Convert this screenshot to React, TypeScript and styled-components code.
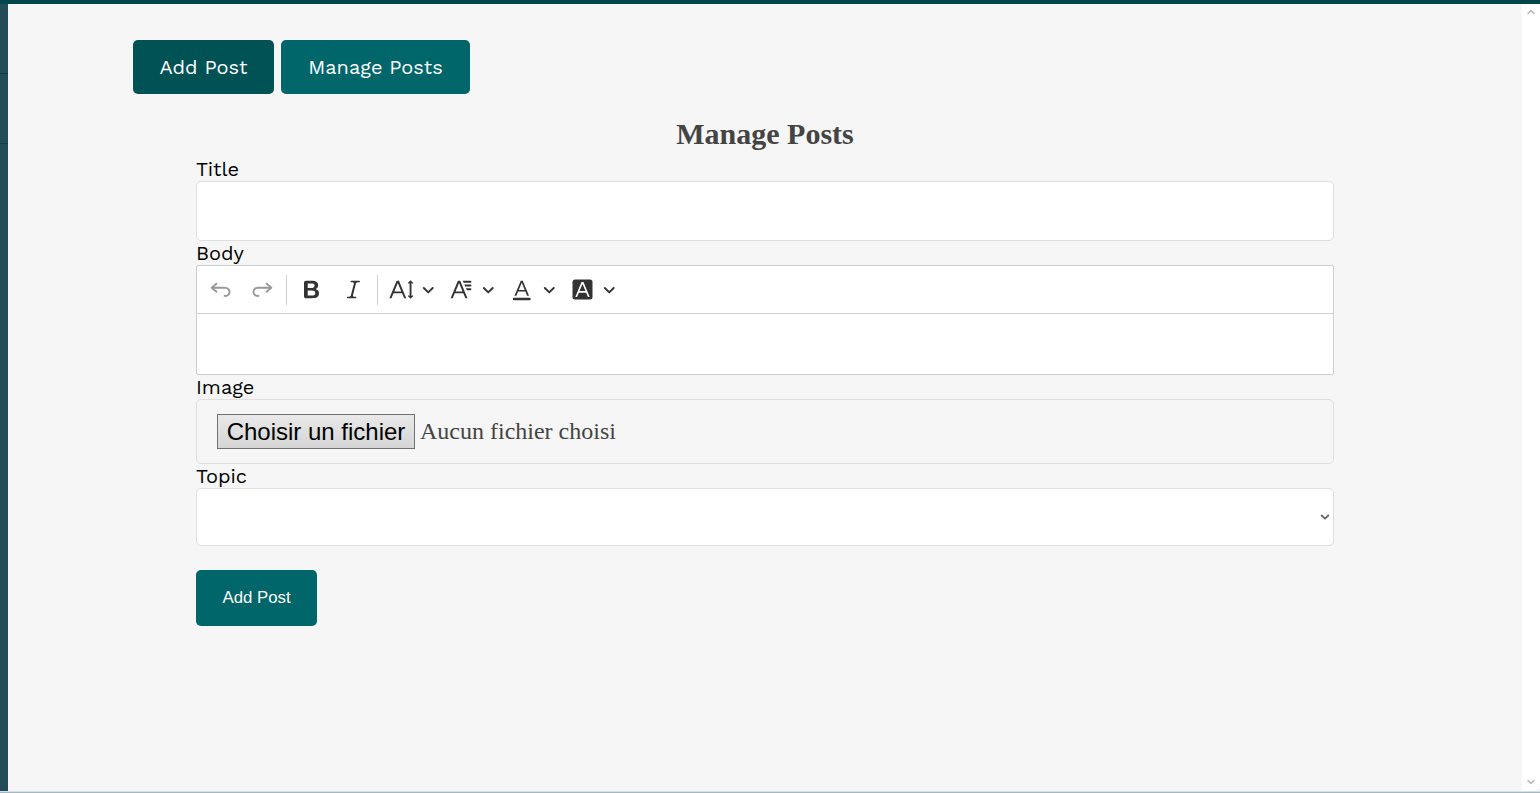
import React from "react";
import styled, { createGlobalStyle } from "styled-components";

const GlobalStyle = createGlobalStyle`
  * { box-sizing: border-box; }
  body { margin: 0; background: #f6f6f6; overflow: hidden; }
`;

const Screen = styled.div`
  display: flex;
  flex-direction: column;
  width: 1540px;
  height: 793px;
  background: #f6f6f6;
`;

const TopBar = styled.div`
  flex: none;
  height: 4px;
  background: #00474b;
`;

const Columns = styled.div`
  flex: 1;
  display: flex;
  min-height: 0;
`;

const Sidebar = styled.div`
  width: 8px;
  background: #244b5a;
`;

const SidebarItem = styled.div`
  height: 70px;
  border-bottom: 1px solid #0a3f49;
`;

const Content = styled.main`
  flex: 1;
  padding: 36px 125px 0;
`;

const ScrollTrack = styled.div`
  width: 18px;
  display: flex;
  flex-direction: column;
  justify-content: space-between;
  align-items: center;
  padding: 5px 1px 6px 0;
  background: #fff;
  border-bottom-right-radius: 8px;
`;

const BottomEdge = styled.div`
  flex: none;
  height: 2px;
  border-top: 1px solid #d3e0e6;
  background: #a5b8bf;
`;

const Actions = styled.div`
  display: flex;
  gap: 7px;
`;

const TabButton = styled.a<{ $active?: boolean; $width: number }>`
  display: flex;
  align-items: center;
  justify-content: center;
  width: ${(p) => p.$width}px;
  height: 54px;
  border-radius: 5px;
  background: ${(p) => (p.$active ? "#005255" : "#006669")};
  color: #fff;
  font: 20px/22px "Work Sans", "Open Sans", sans-serif;
  white-space: nowrap;
`;

const Form = styled.form`
  display: flex;
  flex-direction: column;
  width: 1138px;
  margin: 0 63px;
`;

const Heading = styled.h2`
  margin: 22px 0 4px;
  height: 37px;
  color: #444;
  text-align: center;
  font: bold 30px/35px "Liberation Serif", serif;
`;

const Label = styled.label`
  height: 24px;
  color: #000;
  font: 20px/24px "Work Sans", "Open Sans", sans-serif;
`;

const Field = styled.div<{ $height: number; $plain?: boolean }>`
  display: flex;
  align-items: center;
  height: ${(p) => p.$height}px;
  border: 1px solid #e0e0e0;
  border-radius: 5px;
  background: ${(p) => (p.$plain ? "transparent" : "#fff")};
`;

const FileField = styled(Field)`
  padding-left: 20px;
  gap: 5px;
  color: #444;
  font: 24px/28px "Liberation Serif", serif;
`;

const FileName = styled.span`
  padding-bottom: 2px;
`;

const FileButton = styled.button`
  width: 198px;
  height: 35px;
  padding: 0;
  border: 1px solid #707070;
  background: linear-gradient(#e9e9e9, #d5d5d5);
  color: #000;
  font: 24px/28px "Liberation Sans", sans-serif;
  white-space: nowrap;
`;

const SelectField = styled(Field)`
  justify-content: flex-end;
  padding-right: 3px;
`;

const Editor = styled.div`
  height: 110px;
  border: 1px solid #ccced1;
  border-radius: 2px;
  background: #fff;
`;

const Toolbar = styled.div`
  display: flex;
  align-items: center;
  height: 48px;
  padding-left: 3px;
  border-bottom: 1px solid #ccced1;
  color: #333;
`;

const ToolButton = styled.span<{ $disabled?: boolean }>`
  display: flex;
  justify-content: center;
  width: 41.7px;
  opacity: ${(p) => (p.$disabled ? 0.5 : 1)};
`;

const DropdownButton = styled.span`
  display: flex;
  align-items: center;
  gap: 8.2px;
  width: 60.4px;
  padding-left: 7.4px;
`;

const Separator = styled.span`
  width: 1px;
  height: 30px;
  margin: 0 3.5px 0 2.8px;
  background: #ccced1;
`;

const Submit = styled.button`
  width: 121px;
  height: 56px;
  margin-top: 24px;
  padding: 0 0 1px;
  border: 0;
  border-radius: 5px;
  background: #006669;
  color: #fff;
  font: 16.8px/19px "Liberation Sans", sans-serif;
`;

const ICONS = {
  undo: "m5.042 9.367 2.189 1.837a.75.75 0 0 1-.965 1.149l-3.788-3.18a.747.747 0 0 1-.21-.284.75.75 0 0 1 .17-.945L6.23 4.762a.75.75 0 1 1 .964 1.15L4.863 7.866h8.917A.75.75 0 0 1 14 7.9a4 4 0 1 1-1.477 7.718l.344-1.489a2.5 2.5 0 1 0 1.094-4.73l.008-.032H5.042z",
  bold: "M10.187 17H5.773c-.637 0-1.092-.138-1.364-.415-.273-.277-.409-.718-.409-1.323V4.738c0-.617.14-1.062.419-1.332.279-.27.73-.406 1.354-.406h4.68c.69 0 1.288.041 1.793.124.506.083.96.242 1.36.477.341.197.644.447.906.75a3.262 3.262 0 0 1 .808 2.162c0 1.401-.722 2.426-2.167 3.075C15.05 10.175 16 11.315 16 13.01a3.756 3.756 0 0 1-2.296 3.504 6.1 6.1 0 0 1-1.517.377c-.571.073-1.238.11-2 .11zm-.217-6.217H7v4.087h3.069c1.977 0 2.965-.69 2.965-2.072 0-.707-.256-1.22-.768-1.537-.512-.319-1.277-.478-2.296-.478zM7 5.13v3.619h2.606c.729 0 1.292-.067 1.69-.2a1.6 1.6 0 0 0 .91-.765c.165-.267.247-.566.247-.897 0-.707-.26-1.176-.778-1.409-.519-.232-1.31-.348-2.375-.348H7z",
  italic: "m9.586 14.633.021.004c-.036.335.095.655.393.962.082.083.173.15.274.201h1.474a.6.6 0 1 1 0 1.2H5.304a.6.6 0 0 1 0-1.2h1.15c.474-.07.809-.182 1.005-.334.157-.122.291-.32.404-.597l2.416-9.55a1.053 1.053 0 0 0-.281-.823 1.12 1.12 0 0 0-.442-.296H8.15a.6.6 0 0 1 0-1.2h6.443a.6.6 0 1 1 0 1.2h-1.195c-.376.056-.65.155-.823.296-.215.175-.423.439-.623.79l-2.366 9.347z",
  size: "M9.816 11.5 7.038 4.785 4.261 11.5h5.555Zm.62 1.5H3.641l-1.666 4.028H.312l5.789-14h1.875l5.789 14h-1.663L10.436 13Zm7.55 2.279.779-.779.707.707-2.265 2.265-2.193-2.265.707-.707.765.765V4.825c0-.042 0-.083.002-.123l-.77.77-.707-.707L17.207 2.5l2.265 2.265-.707.707-.782-.782c.002.043.003.089.003.135v10.454Z",
  family: "M11.03 3h6.149a.75.75 0 1 1 0 1.5h-5.514L11.03 3zm1.27 3h4.879a.75.75 0 1 1 0 1.5h-4.244L12.3 6zm1.27 3h3.609a.75.75 0 1 1 0 1.5h-2.973L13.57 9zm-2.754 2.5L8.038 4.785 5.261 11.5h5.555zm.62 1.5H4.641l-1.666 4.028H1.312l5.789-14h1.875l5.789 14h-1.663L11.436 13z",
  color: "M11.8 10.3 9.4 4.5 7 10.3h4.8zm.5 1.2H6.5L5.1 15H3.6l5-12h1.6l5 12h-1.5L12.3 11.5zm3.3 7H3.2a1 1 0 0 1 0-2h12.4a1 1 0 0 1 0 2z",
  background: "M4 2h12a2 2 0 0 1 2 2v12a2 2 0 0 1-2 2H4a2 2 0 0 1-2-2V4c0-1.1.9-2 2-2zm8.38 9.262H7.62L10 5.506l2.38 5.756zm.532 1.285L14.34 16h1.426L10.804 4H9.196L4.234 16H5.66l1.428-3.453h5.824z",
};

function Icon({ name, flip }: { name: keyof typeof ICONS; flip?: boolean }) {
  return (
    <svg width="25" height="25" viewBox="0 0 20 20" fill="currentColor" fillRule="evenodd">
      <path d={ICONS[name]} transform={flip ? "translate(20 0) scale(-1 1)" : undefined} />
    </svg>
  );
}

function DropdownArrow() {
  return (
    <svg width="12.5" height="12.5" viewBox="0 0 10 10" fill="currentColor">
      <path d="M.941 4.523a.75.75 0 1 1 1.06-1.06l3.006 3.005 3.005-3.005a.75.75 0 1 1 1.06 1.06l-3.549 3.55a.75.75 0 0 1-1.034 0L.941 4.523z" />
    </svg>
  );
}

function Chevron({ up, color, width }: { up?: boolean; color: string; width: number }) {
  return (
    <svg width={width} height="6" viewBox="0 0 9 6" fill="none" stroke={color} strokeWidth="1.8">
      <path d={up ? "M.7 5 4.5 1.4 8.3 5" : "M.7 1 4.5 4.6 8.3 1"} />
    </svg>
  );
}

export default function App() {
  return (
    <>
      <GlobalStyle />
      <Screen>
        <TopBar />
        <Columns>
          <Sidebar>
            <SidebarItem />
            <SidebarItem />
          </Sidebar>
          <Content>
            <Actions>
              <TabButton $active $width={141}>Add Post</TabButton>
              <TabButton $width={189}>Manage Posts</TabButton>
            </Actions>
            <Form>
              <Heading>Manage Posts</Heading>
              <Label>Title</Label>
              <Field $height={60} />
              <Label>Body</Label>
              <Editor>
                <Toolbar>
                  <ToolButton $disabled><Icon name="undo" /></ToolButton>
                  <ToolButton $disabled><Icon name="undo" flip /></ToolButton>
                  <Separator />
                  <ToolButton><Icon name="bold" /></ToolButton>
                  <ToolButton><Icon name="italic" /></ToolButton>
                  <Separator />
                  <DropdownButton><Icon name="size" /><DropdownArrow /></DropdownButton>
                  <DropdownButton><Icon name="family" /><DropdownArrow /></DropdownButton>
                  <DropdownButton><Icon name="color" /><DropdownArrow /></DropdownButton>
                  <DropdownButton><Icon name="background" /><DropdownArrow /></DropdownButton>
                </Toolbar>
              </Editor>
              <Label>Image</Label>
              <FileField $height={65} $plain>
                <FileButton type="button">Choisir un fichier</FileButton>
                <FileName>Aucun fichier choisi</FileName>
              </FileField>
              <Label>Topic</Label>
              <SelectField $height={58}>
                <Chevron color="#666" width={10} />
              </SelectField>
              <Submit type="button">Add Post</Submit>
            </Form>
          </Content>
          <ScrollTrack>
            <Chevron up color="#b8b8b8" width={8} />
            <Chevron color="#b8b8b8" width={8} />
          </ScrollTrack>
        </Columns>
        <BottomEdge />
      </Screen>
    </>
  );
}
